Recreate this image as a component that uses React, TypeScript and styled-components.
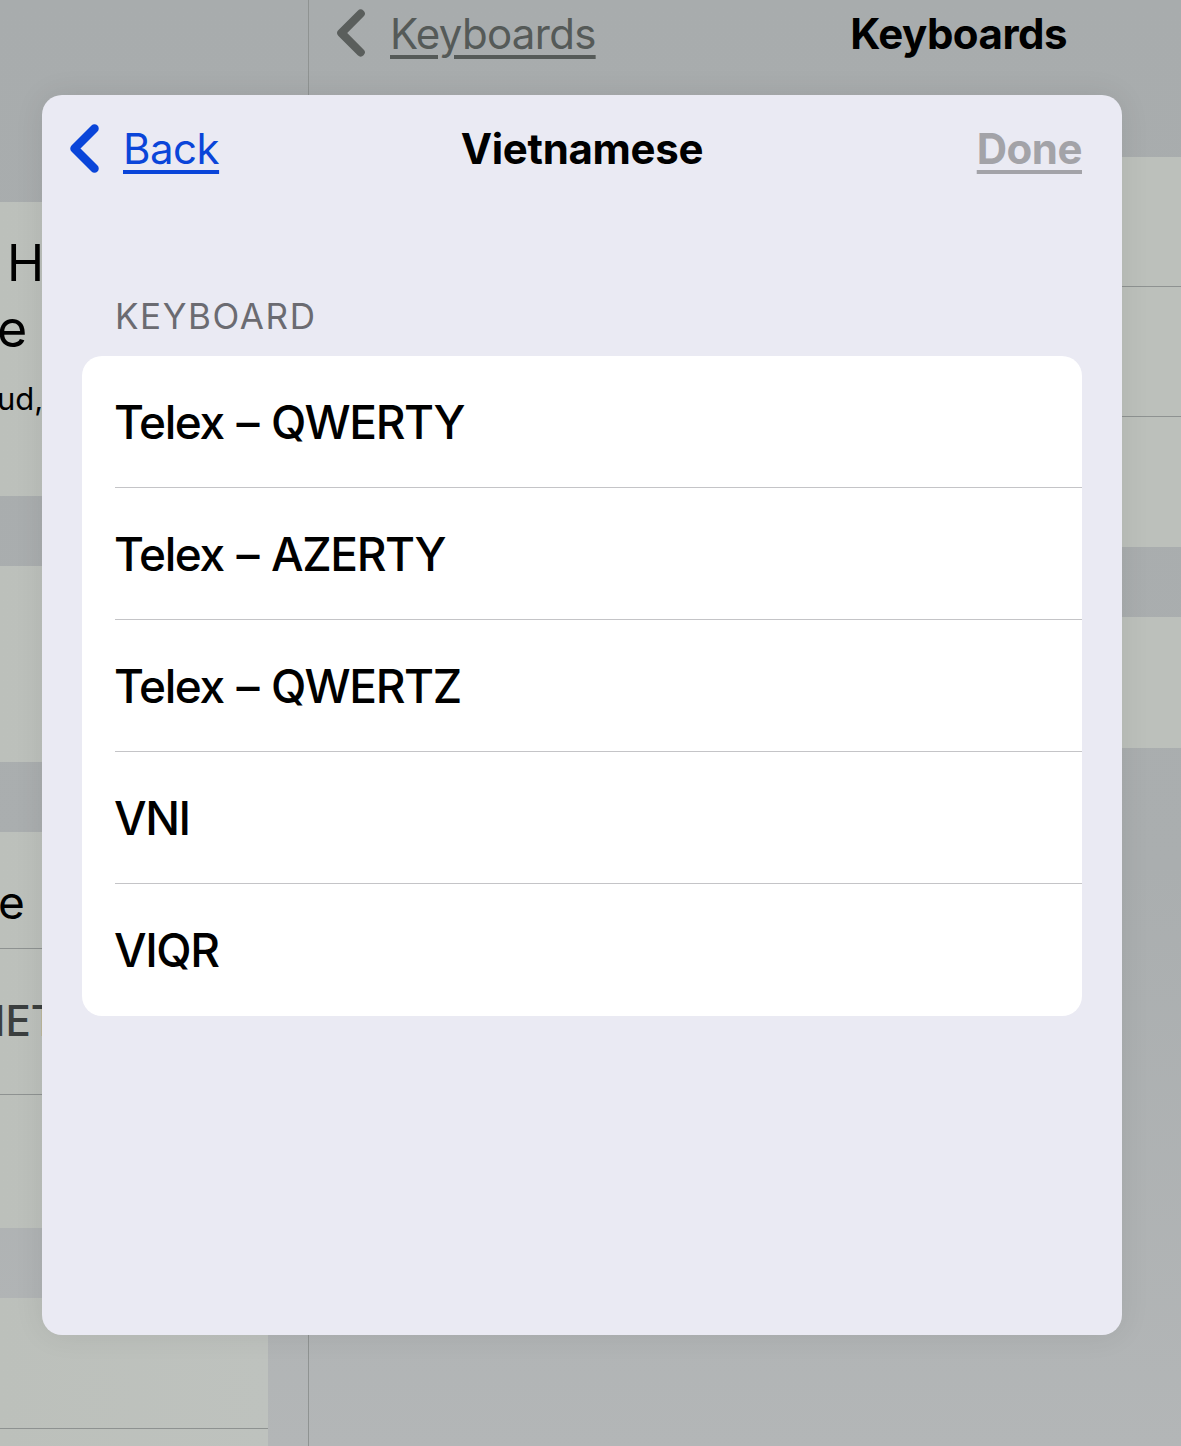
import React from "react";
import styled, { createGlobalStyle } from "styled-components";

const GlobalStyle = createGlobalStyle`
  html, body { margin: 0; padding: 0; }
  body {
    font-family: Inter, "Noto Sans", "Liberation Sans", sans-serif;
    -webkit-font-smoothing: antialiased;
  }
`;

const Screen = styled.div`
  position: relative;
  width: 1181px;
  height: 1446px;
  overflow: hidden;
  background: linear-gradient(180deg, #a8acad 0%, #aaaeaf 60%, #b3b6b7 100%);
  display: grid;
  grid-template-columns: 308px 1px 1fr;
`;

/* ---------- dimmed background: sidebar ---------- */

const Sidebar = styled.div`
  display: flex;
  flex-direction: column;
  padding-right: 40px;
`;

const Spacer = styled.div<{ $h: number }>`
  height: ${(p) => p.$h}px;
  flex-shrink: 0;
`;

const Group = styled.div`
  display: flex;
  flex-direction: column;
  background: linear-gradient(90deg, #bcc0bb, #bec2be);
`;

const Cell = styled.div<{ $h: number; $sep?: boolean; $pt?: number }>`
  height: ${(p) => p.$h}px;
  box-sizing: border-box;
  border-bottom: ${(p) => (p.$sep ? "1.5px solid #8e9291" : "none")};
  display: flex;
  flex-direction: column;
  justify-content: center;
  padding-top: ${(p) => p.$pt ?? 0}px;
  overflow: hidden;
`;

const ProfileCell = styled(Cell)`
  justify-content: flex-start;
  padding-top: 26px;
`;

const ClipText = styled.div<{ $size: number; $indent: number; $weight?: number; $color?: string; $lh?: number }>`
  font-size: ${(p) => p.$size}px;
  font-weight: ${(p) => p.$weight ?? 400};
  color: ${(p) => p.$color ?? "#000"};
  line-height: ${(p) => p.$lh ?? 1.2};
  margin-left: ${(p) => p.$indent}px;
  white-space: nowrap;
`;

const VDivider = styled.div`
  background: #8f9392;
`;

/* ---------- dimmed background: detail pane ---------- */

const Detail = styled.div`
  display: flex;
  flex-direction: column;
  padding-left: 40px;
`;

const TopArea = styled.div`
  height: 157px;
  margin-left: -40px;
  flex-shrink: 0;
`;

const NavBar = styled.div`
  height: 66px;
  display: flex;
  align-items: center;
  justify-content: space-between;
  padding: 0 114px 0 28px;
`;

const NavBack = styled.div`
  display: flex;
  align-items: center;
  gap: 25px;
  color: #555a58;
  font-size: 42px;
  text-decoration: underline;
  text-decoration-thickness: 4px;
  text-underline-offset: 6px;
  letter-spacing: -0.7px;
`;

const NavTitle = styled.div`
  font-size: 42px;
  font-weight: 700;
  color: #000;
  letter-spacing: -0.5px;
`;

const DetailGroup = styled(Group)`
  background: #bcc0bb;
`;

/* ---------- modal sheet ---------- */

const Sheet = styled.div`
  position: absolute;
  left: 42px;
  top: 95px;
  width: 1080px;
  height: 1240px;
  border-radius: 20px;
  background: #eaeaf3;
  display: flex;
  flex-direction: column;
  box-shadow: 0 0 30px rgba(0, 0, 0, 0.08);
`;

const SheetHeader = styled.div`
  height: 106px;
  flex-shrink: 0;
  display: grid;
  grid-template-columns: 1fr auto 1fr;
  align-items: center;
  padding: 0 40px;
`;

const BackButton = styled.div`
  display: flex;
  align-items: center;
  gap: 24px;
  color: #0a45d9;
  font-size: 42px;
  letter-spacing: -0.5px;
  justify-self: start;
  margin-left: -12px;
`;

const Underlined = styled.span`
  text-decoration: underline;
  text-decoration-thickness: 4px;
  text-underline-offset: 6px;
`;

const SheetTitle = styled.div`
  font-size: 42px;
  font-weight: 700;
  color: #000;
  letter-spacing: -0.3px;
`;

const DoneButton = styled(Underlined)`
  justify-self: end;
  font-size: 42px;
  font-weight: 700;
  color: #a3a3a8;
  letter-spacing: -0.5px;
`;

const SheetBody = styled.div`
  padding: 95px 40px 0 40px;
  display: flex;
  flex-direction: column;
`;

const SectionLabel = styled.div`
  font-size: 35px;
  line-height: 40px;
  color: #6b6b71;
  padding-left: 33px;
  letter-spacing: 1.6px;
  margin-bottom: 20px;
`;

const Card = styled.div`
  background: #fff;
  border-radius: 20px;
  overflow: hidden;
  display: flex;
  flex-direction: column;
`;

const Row = styled.div`
  padding-left: 32px;
`;

const RowInner = styled.div<{ $last?: boolean }>`
  height: 132px;
  box-sizing: border-box;
  display: flex;
  align-items: center;
  border-bottom: ${(p) => (p.$last ? "none" : "1.5px solid #c4c4c7")};
  margin-left: 1px;
  font-size: 46px;
  font-weight: 500;
  line-height: 58px;
  color: #000;
  letter-spacing: -1.4px;
  word-spacing: 2px;
  text-indent: -1px;
`;

const Chevron = ({ color, w, h }: { color: string; w: number; h: number }) => (
  <svg width={w} height={h} viewBox="0 0 29 49" fill="none">
    <path
      d="M24.5 4.5 L4.5 24.5 L24.5 44.5"
      stroke={color}
      strokeWidth="8.5"
      strokeLinecap="round"
      strokeLinejoin="round"
    />
  </svg>
);

const layouts = ["Telex – QWERTY", "Telex – AZERTY", "Telex – QWERTZ", "VNI", "VIQR"];

export default function App() {
  return (
    <>
      <GlobalStyle />
      <Screen>
        <Sidebar>
          <Spacer $h={202} />
          <Group>
            <ProfileCell $h={294}>
              <ClipText $size={50} $indent={7} $lh={1.4}>H</ClipText>
              <ClipText $size={52} $indent={-3} $lh={1.2}>e</ClipText>
              <ClipText $size={31} $indent={-3} $lh={2.5}>ud,</ClipText>
            </ProfileCell>
          </Group>
          <Spacer $h={70} />
          <Group>
            <Cell $h={196} />
          </Group>
          <Spacer $h={70} />
          <Group>
            <Cell $h={117} $sep $pt={26}>
              <ClipText $size={46} $indent={-2}>e</ClipText>
            </Cell>
            <Cell $h={146} $sep>
              <ClipText $size={42} $indent={-6} $color="#3b3f3f" $weight={500}>IET</ClipText>
            </Cell>
            <Cell $h={133} />
          </Group>
          <Spacer $h={70} />
          <Group>
            <Cell $h={131} $sep />
            <Cell $h={80} />
          </Group>
        </Sidebar>

        <VDivider />

        <Detail>
          <TopArea>
            <NavBar>
              <NavBack>
                <Chevron color="#5a5e5c" w={28} h={48} />
                <span>Keyboards</span>
              </NavBack>
              <NavTitle>Keyboards</NavTitle>
            </NavBar>
          </TopArea>
          <DetailGroup>
            <Cell $h={130} $sep />
            <Cell $h={130} $sep />
            <Cell $h={130} />
          </DetailGroup>
          <Spacer $h={70} />
          <DetailGroup>
            <Cell $h={131} />
          </DetailGroup>
        </Detail>

        <Sheet>
          <SheetHeader>
            <BackButton>
              <Chevron color="#0a45d9" w={29} h={49} />
              <Underlined>Back</Underlined>
            </BackButton>
            <SheetTitle>Vietnamese</SheetTitle>
            <DoneButton>Done</DoneButton>
          </SheetHeader>
          <SheetBody>
            <SectionLabel>KEYBOARD</SectionLabel>
            <Card>
              {layouts.map((name, i) => (
                <Row key={name}>
                  <RowInner $last={i === layouts.length - 1}>{name}</RowInner>
                </Row>
              ))}
            </Card>
          </SheetBody>
        </Sheet>
      </Screen>
    </>
  );
}
